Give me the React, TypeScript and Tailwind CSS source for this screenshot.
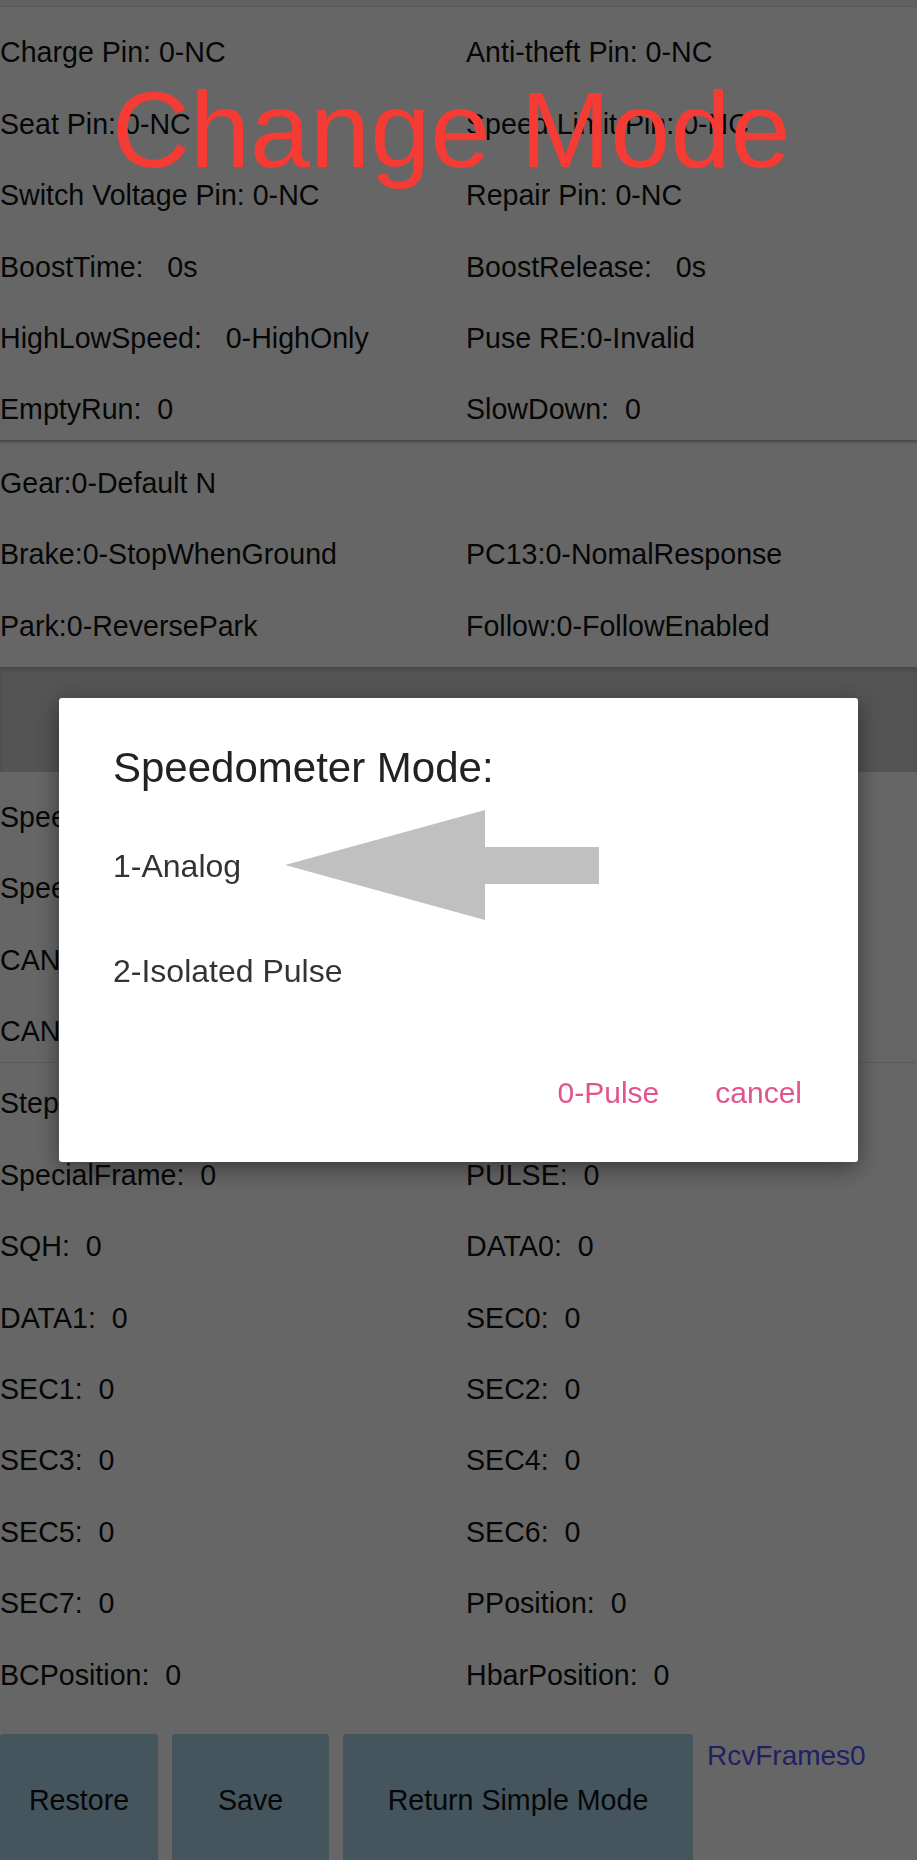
import React from "react";

// rows as [left column, right column]
const pinRows: [string, string][] = [
  ["Charge Pin: 0-NC", "Anti-theft Pin: 0-NC"],
  ["Seat Pin: 0-NC", "Speed Limit Pin: 0-NC"],
  ["Switch Voltage Pin: 0-NC", "Repair Pin: 0-NC"],
  ["BoostTime:   0s", "BoostRelease:   0s"],
  ["HighLowSpeed:   0-HighOnly", "Puse RE:0-Invalid"],
  ["EmptyRun:  0", "SlowDown:  0"],
];

const gearRows: [string, string][] = [
  ["Gear:0-Default N", ""],
  ["Brake:0-StopWhenGround", "PC13:0-NomalResponse"],
  ["Park:0-ReversePark", "Follow:0-FollowEnabled"],
];

// mostly hidden behind the dialog
const meterRows: [string, string][] = [
  ["Speedometer:0-Pulse", ""],
  ["SpeedLimit:0", ""],
  ["CANBaud:0", ""],
  ["CANMode:0", ""],
];

const frameRows: [string, string][] = [
  ["StepFrame:  0", ""],
  ["SpecialFrame:  0", "PULSE:  0"],
  ["SQH:  0", "DATA0:  0"],
  ["DATA1:  0", "SEC0:  0"],
  ["SEC1:  0", "SEC2:  0"],
  ["SEC3:  0", "SEC4:  0"],
  ["SEC5:  0", "SEC6:  0"],
  ["SEC7:  0", "PPosition:  0"],
  ["BCPosition:  0", "HbarPosition:  0"],
];

function Row({ left, right }: { left: string; right: string }) {
  return (
    <div className="flex h-[71.4px] items-center pt-[10px] text-[28.6px] leading-none text-[#111]">
      <span className="w-[466px] shrink-0 whitespace-pre">{left}</span>
      <span className="whitespace-pre">{right}</span>
    </div>
  );
}

export default function App() {
  return (
    <div className="relative h-[1860px] w-[917px] overflow-hidden bg-white font-['Liberation_Sans',Arial,sans-serif]">
      {/* status strip */}
      <div className="h-[7px] border-b border-[#f3e2e2] bg-[#ebf4fd]" />

      <div className="pt-[5px]">
        {pinRows.map(([l, r]) => (
          <Row key={l} left={l} right={r} />
        ))}
      </div>
      <div className="h-[2px] bg-[#bdbdbd] shadow-[0_1px_3px_rgba(0,0,0,0.2)]" />

      <div>
        {gearRows.map(([l, r]) => (
          <Row key={l} left={l} right={r} />
        ))}
      </div>

      {/* speedometer header bar */}
      <div className="mt-[10px] h-[105px] bg-[#d2d2d2] shadow-[inset_0_3px_4px_rgba(0,0,0,0.15)]" />

      <div className="pt-[5px]">
        {meterRows.map(([l, r]) => (
          <Row key={l} left={l} right={r} />
        ))}
      </div>
      <div className="h-px bg-[#e2e2e2]" />

      <div>
        {frameRows.map(([l, r]) => (
          <Row key={l} left={l} right={r} />
        ))}
      </div>

      {/* bottom buttons */}
      <div className="mt-[28px] flex items-start gap-[14px]">
        <button className="flex h-[134px] w-[158px] items-center justify-center rounded-[3px] bg-[#aad5eb] text-[28.6px] text-[#111]">
          Restore
        </button>
        <button className="flex h-[134px] w-[157px] items-center justify-center rounded-[3px] bg-[#aad5eb] text-[28.6px] text-[#111]">
          Save
        </button>
        <button className="flex h-[134px] w-[350px] items-center justify-center rounded-[3px] bg-[#aad5eb] text-[28.6px] text-[#111]">
          Return Simple Mode
        </button>
        <span className="pt-[6px] text-[28px] leading-[32px] text-[#5252f5]">RcvFrames0</span>
      </div>

      {/* modal */}
      <div className="fixed inset-0 flex items-center justify-center bg-black/60">
        <div className="flex h-[464px] w-[799px] flex-col rounded-[3px] bg-white pt-[46px] pl-[54px] pr-[56px] shadow-[0_6px_24px_rgba(0,0,0,0.45)]">
          <h2 className="text-[42px] leading-[48px] text-[#222]">Speedometer Mode:</h2>
          <div className="mt-[21px]">
            <div className="flex h-[105px] items-center text-[32px] text-[#333]">1-Analog</div>
            <div className="flex h-[105px] items-center text-[32px] text-[#333]">2-Isolated Pulse</div>
          </div>
          <div className="flex h-[138px] items-center justify-end gap-[56px] text-[30px] text-[#e0558a]">
            <span>0-Pulse</span>
            <span>cancel</span>
          </div>
        </div>
      </div>

      {/* annotation arrow */}
      <svg className="absolute left-0 top-0" width="917" height="1860" viewBox="0 0 917 1860">
        <polygon points="285,865 485,810 485,847 599,847 599,884 485,884 485,920" fill="#c0c0c0" />
      </svg>

      {/* annotation label */}
      <div className="absolute left-[112px] top-[76px] text-[108px] leading-none text-[#f53b33]">
        Change Mode
      </div>
    </div>
  );
}
